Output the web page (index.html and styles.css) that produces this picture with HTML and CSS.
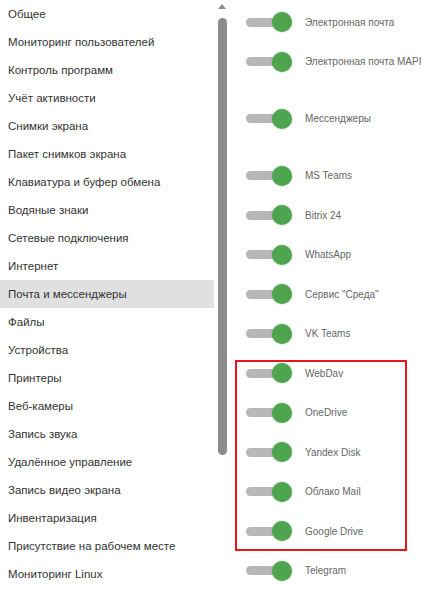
FILE: index.html
```html
<!DOCTYPE html>
<html lang="ru">
<head>
<meta charset="UTF-8">
<meta name="viewport" content="width=device-width, initial-scale=1.0">
<title>Почта и мессенджеры</title>
<link rel="stylesheet" href="styles.css">
</head>
<body>
<div class="container">
    <ul class="menu">
        <li class="menu-item">Общее</li>
        <li class="menu-item">Мониторинг пользователей</li>
        <li class="menu-item">Контроль программ</li>
        <li class="menu-item">Учёт активности</li>
        <li class="menu-item">Снимки экрана</li>
        <li class="menu-item">Пакет снимков экрана</li>
        <li class="menu-item">Клавиатура и буфер обмена</li>
        <li class="menu-item">Водяные знаки</li>
        <li class="menu-item">Сетевые подключения</li>
        <li class="menu-item">Интернет</li>
        <li class="menu-item active">Почта и мессенджеры</li>
        <li class="menu-item">Файлы</li>
        <li class="menu-item">Устройства</li>
        <li class="menu-item">Принтеры</li>
        <li class="menu-item">Веб-камеры</li>
        <li class="menu-item">Запись звука</li>
        <li class="menu-item">Удалённое управление</li>
        <li class="menu-item">Запись видео экрана</li>
        <li class="menu-item">Инвентаризация</li>
        <li class="menu-item">Присутствие на рабочем месте</li>
        <li class="menu-item">Мониторинг Linux</li>
    </ul>

    <div class="scrollbar">
        <div class="scroll-arrow"></div>
        <div class="scroll-thumb"></div>
    </div>

    <div class="settings">
        <div class="setting"><span class="toggle"><span class="knob"></span></span><span class="setting-label">Электронная почта</span></div>
        <div class="setting"><span class="toggle"><span class="knob"></span></span><span class="setting-label">Электронная почта MAPI</span></div>
        <div class="setting tall"><span class="toggle"><span class="knob"></span></span><span class="setting-label">Мессенджеры</span></div>
        <div class="setting"><span class="toggle"><span class="knob"></span></span><span class="setting-label">MS Teams</span></div>
        <div class="setting"><span class="toggle"><span class="knob"></span></span><span class="setting-label">Bitrix 24</span></div>
        <div class="setting"><span class="toggle"><span class="knob"></span></span><span class="setting-label">WhatsApp</span></div>
        <div class="setting"><span class="toggle"><span class="knob"></span></span><span class="setting-label">Сервис "Среда"</span></div>
        <div class="setting"><span class="toggle"><span class="knob"></span></span><span class="setting-label">VK Teams</span></div>
        <div class="marked">
            <div class="setting"><span class="toggle"><span class="knob"></span></span><span class="setting-label">WebDav</span></div>
            <div class="setting"><span class="toggle"><span class="knob"></span></span><span class="setting-label">OneDrive</span></div>
            <div class="setting"><span class="toggle"><span class="knob"></span></span><span class="setting-label">Yandex Disk</span></div>
            <div class="setting"><span class="toggle"><span class="knob"></span></span><span class="setting-label">Облако Mail</span></div>
            <div class="setting"><span class="toggle"><span class="knob"></span></span><span class="setting-label">Google Drive</span></div>
        </div>
        <div class="setting"><span class="toggle"><span class="knob"></span></span><span class="setting-label">Telegram</span></div>
    </div>
</div>
</body>
</html>
```

FILE: styles.css
```css
body {
    margin: 0;
    background: #fff;
    font-family: "Liberation Sans", Arial, sans-serif;
    overflow: hidden;
}

.container {
    display: flex;
    height: 590px;
}

.menu {
    list-style: none;
    margin: 0;
    padding: 0;
    width: 214px;
    flex-shrink: 0;
}

.menu-item {
    height: 28px;
    line-height: 28px;
    padding-left: 8px;
    font-size: 11.5px;
    color: #333;
    white-space: nowrap;
}

.menu-item.active {
    background-color: #e0e0e0;
}

.scrollbar {
    width: 16px;
    flex-shrink: 0;
    display: flex;
    flex-direction: column;
    align-items: center;
    padding-top: 4px;
    box-sizing: border-box;
}

.scroll-arrow {
    width: 0;
    height: 0;
    border-left: 4.5px solid transparent;
    border-right: 4.5px solid transparent;
    border-bottom: 5px solid #8c8c8c;
}

.scroll-thumb {
    width: 9px;
    height: 437px;
    margin-top: 9px;
    background-color: #8c8c8c;
    border-radius: 4.5px;
}

.settings {
    padding: 2.5px 0 0 16px;
}

.setting {
    display: flex;
    align-items: center;
    height: 39.5px;
}

.setting.tall {
    height: 74.5px;
}

.toggle {
    position: relative;
    width: 46px;
    height: 20px;
    flex-shrink: 0;
    display: flex;
    align-items: center;
}

.toggle::before {
    content: "";
    width: 36px;
    height: 9px;
    border-radius: 4.5px;
    background-color: #b7b7b7;
}

.knob {
    position: absolute;
    left: 26px;
    top: 0;
    width: 20px;
    height: 20px;
    border-radius: 50%;
    background-color: #4ea44f;
    box-shadow: 0 0 2px rgba(76, 160, 76, 0.6);
}

.setting-label {
    margin-left: 13px;
    font-size: 10px;
    color: #666;
    white-space: nowrap;
}

.marked {
    position: relative;
}

.marked::after {
    content: "";
    position: absolute;
    left: -11px;
    top: 6.5px;
    width: 172px;
    height: 191px;
    border: 2.5px solid #e8161b;
    box-sizing: border-box;
}
```
